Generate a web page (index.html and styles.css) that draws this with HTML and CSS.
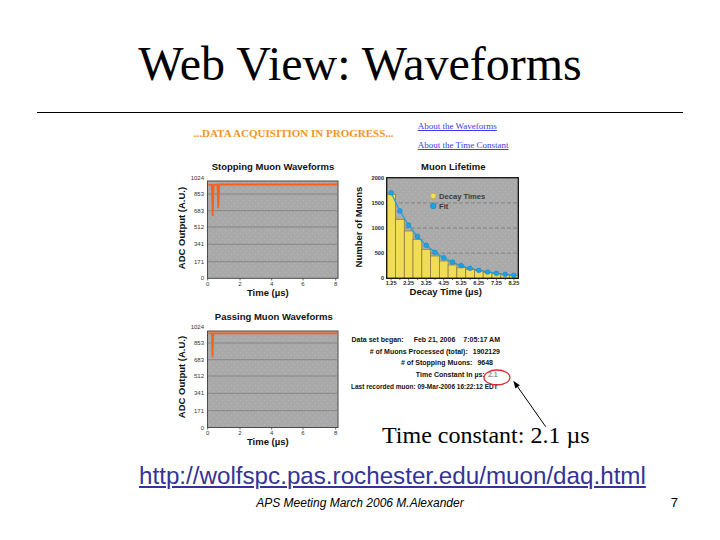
FILE: index.html
```html
<!DOCTYPE html>
<html>
<head>
<meta charset="utf-8">
<title>Web View: Waveforms</title>
<link rel="stylesheet" href="styles.css">
</head>
<body>
<div class="slide">
  <h1 class="title">Web View: Waveforms</h1>
  <div class="rule"></div>

  <div class="web">
    <div class="topbar">
      <div class="status">...DATA ACQUISITION IN PROGRESS...</div>
      <div class="links">
        <a href="#waveforms">About the Waveforms</a>
        <a href="#timeconstant">About the Time Constant</a>
      </div>
    </div>

    <div class="charts">
      <!-- Stopping muon waveforms -->
      <svg class="chart" width="175" height="142" viewBox="0 0 175 142">
        <defs>
          <pattern id="stipA" width="6" height="6" patternUnits="userSpaceOnUse">
            <rect width="6" height="6" fill="#a9a9a9"/>
            <rect x="1" y="1" width="1" height="1" fill="#b9b9b9"/>
            <rect x="4" y="4" width="1" height="1" fill="#b6b6b6"/>
          </pattern>
        </defs>
        <text class="ct" x="103" y="13.3" text-anchor="middle">Stopping Muon Waveforms</text>
        <text class="ct" transform="translate(15.3,71) rotate(-90)" text-anchor="middle">ADC Output (A.U.)</text>
        <rect x="37.5" y="24" width="130.5" height="97.3" fill="url(#stipA)" stroke="#4a4a4a" stroke-width="1"/>
        <g class="grid">
          <line x1="38" y1="37" x2="167.5" y2="37"/>
          <line x1="38" y1="53.7" x2="167.5" y2="53.7"/>
          <line x1="38" y1="70" x2="167.5" y2="70"/>
          <line x1="38" y1="87.3" x2="167.5" y2="87.3"/>
          <line x1="38" y1="104.7" x2="167.5" y2="104.7"/>
        </g>
        <g class="tl" text-anchor="end">
          <text x="34" y="23.4">1024</text>
          <text x="34" y="39.1">853</text>
          <text x="34" y="55.8">683</text>
          <text x="34" y="72.1">512</text>
          <text x="34" y="89.4">341</text>
          <text x="34" y="106.8">171</text>
          <text x="34" y="123.4">0</text>
        </g>
        <g class="ticks">
          <line x1="37.7" y1="121.3" x2="37.7" y2="123.5"/>
          <line x1="70" y1="121.3" x2="70" y2="123.5"/>
          <line x1="101.7" y1="121.3" x2="101.7" y2="123.5"/>
          <line x1="133" y1="121.3" x2="133" y2="123.5"/>
          <line x1="165.7" y1="121.3" x2="165.7" y2="123.5"/>
        </g>
        <g class="tl" text-anchor="middle">
          <text x="37.7" y="128.5">0</text>
          <text x="70" y="128.5">2</text>
          <text x="101.7" y="128.5">4</text>
          <text x="133" y="128.5">6</text>
          <text x="165.7" y="128.5">8</text>
        </g>
        <path class="wave" d="M38.5 27.8 L41.8 27.8 L42.7 59 L43.6 28 L47.4 27.5 L48.3 51.3 L49.2 27.5 L167.5 27.5"/>
        <text class="ct" x="97.8" y="139" text-anchor="middle">Time (µs)</text>
      </svg>

      <!-- Muon lifetime -->
      <svg class="chart" width="180" height="142" viewBox="0 0 180 142">
        <defs>
          <pattern id="stipB" width="6" height="6" patternUnits="userSpaceOnUse">
            <rect width="6" height="6" fill="#aaaaaa"/>
            <rect x="1" y="1" width="1" height="1" fill="#bababa"/>
            <rect x="4" y="4" width="1" height="1" fill="#b7b7b7"/>
          </pattern>
        </defs>
        <text class="ct" x="108.3" y="13.3" text-anchor="middle">Muon Lifetime</text>
        <text class="ct" transform="translate(16.9,70) rotate(-90)" text-anchor="middle">Number of Muons</text>
        <rect x="41.7" y="20.7" width="131.6" height="100.6" fill="url(#stipB)"/>
        <g class="dash">
          <line x1="42" y1="45.9" x2="173" y2="45.9"/>
          <line x1="42" y1="71" x2="173" y2="71"/>
          <line x1="42" y1="96.2" x2="173" y2="96.2"/>
        </g>
        <g class="bars">
          <rect x="41.7" y="37.3" width="8.775" height="84"/>
          <rect x="50.5" y="62.3" width="8.775" height="59"/>
          <rect x="59.3" y="74" width="8.775" height="47.3"/>
          <rect x="68" y="82.3" width="8.775" height="39"/>
          <rect x="76.8" y="92.3" width="8.775" height="29"/>
          <rect x="85.6" y="99" width="8.775" height="22.3"/>
          <rect x="94.4" y="104" width="8.775" height="17.3"/>
          <rect x="103.1" y="108" width="8.775" height="13.3"/>
          <rect x="111.9" y="110.7" width="8.775" height="10.6"/>
          <rect x="120.7" y="112.3" width="8.775" height="9"/>
          <rect x="129.5" y="113.7" width="8.775" height="7.6"/>
          <rect x="138.2" y="115.3" width="8.775" height="6"/>
          <rect x="147" y="116.6" width="8.775" height="4.7"/>
          <rect x="155.8" y="117.8" width="8.775" height="3.5"/>
          <rect x="164.6" y="118.5" width="8.775" height="2.8"/>
        </g>
        <polyline class="fit" points="46.1,35.8 54.9,53.9 63.6,68.2 72.4,79.5 81.2,88.3 90,95.3 98.7,100.8 107.5,105.2 116.3,108.6 125.1,111.3 133.8,113.4 142.6,115.1 151.4,116.4 160.2,117.4 168.9,118.3"/>
        <g class="dots">
          <circle cx="46.1" cy="35.8" r="2.4"/>
          <circle cx="54.9" cy="53.9" r="2.4"/>
          <circle cx="63.6" cy="68.2" r="2.4"/>
          <circle cx="72.4" cy="79.5" r="2.4"/>
          <circle cx="81.2" cy="88.3" r="2.4"/>
          <circle cx="90" cy="95.3" r="2.4"/>
          <circle cx="98.7" cy="100.8" r="2.4"/>
          <circle cx="107.5" cy="105.2" r="2.4"/>
          <circle cx="116.3" cy="108.6" r="2.4"/>
          <circle cx="125.1" cy="111.3" r="2.4"/>
          <circle cx="133.8" cy="113.4" r="2.4"/>
          <circle cx="142.6" cy="115.1" r="2.4"/>
          <circle cx="151.4" cy="116.4" r="2.4"/>
          <circle cx="160.2" cy="117.4" r="2.4"/>
          <circle cx="168.9" cy="118.3" r="2.4"/>
        </g>
        <rect x="41.7" y="20.7" width="131.6" height="100.6" fill="none" stroke="#111" stroke-width="1.3"/>
        <circle cx="88.3" cy="39" r="2.8" fill="#f3df4f" stroke="#b9a53a" stroke-width="0.6"/>
        <text class="lg" x="94" y="41.8">Decay Times</text>
        <circle cx="88.3" cy="49" r="2.8" fill="#1ea3e4" stroke="#117cbd" stroke-width="0.6"/>
        <text class="lg" x="94" y="51.8">Fit</text>
        <g class="tl tlb" text-anchor="end">
          <text x="39" y="22.8">2000</text>
          <text x="39" y="48">1500</text>
          <text x="39" y="73.1">1000</text>
          <text x="39" y="98.3">500</text>
          <text x="39" y="123.4">0</text>
        </g>
        <g class="ticks">
          <line x1="46.1" y1="121.3" x2="46.1" y2="123.5"/>
          <line x1="54.9" y1="121.3" x2="54.9" y2="123"/>
          <line x1="63.6" y1="121.3" x2="63.6" y2="123.5"/>
          <line x1="72.4" y1="121.3" x2="72.4" y2="123"/>
          <line x1="81.2" y1="121.3" x2="81.2" y2="123.5"/>
          <line x1="90" y1="121.3" x2="90" y2="123"/>
          <line x1="98.7" y1="121.3" x2="98.7" y2="123.5"/>
          <line x1="107.5" y1="121.3" x2="107.5" y2="123"/>
          <line x1="116.3" y1="121.3" x2="116.3" y2="123.5"/>
          <line x1="125.1" y1="121.3" x2="125.1" y2="123"/>
          <line x1="133.8" y1="121.3" x2="133.8" y2="123.5"/>
          <line x1="142.6" y1="121.3" x2="142.6" y2="123"/>
          <line x1="151.4" y1="121.3" x2="151.4" y2="123.5"/>
          <line x1="160.2" y1="121.3" x2="160.2" y2="123"/>
          <line x1="168.9" y1="121.3" x2="168.9" y2="123.5"/>
        </g>
        <g class="tl tlb" text-anchor="middle">
          <text x="46.1" y="128">1.25</text>
          <text x="63.6" y="128">2.25</text>
          <text x="81.2" y="128">3.25</text>
          <text x="98.7" y="128">4.25</text>
          <text x="116.3" y="128">5.25</text>
          <text x="133.8" y="128">6.25</text>
          <text x="151.4" y="128">7.25</text>
          <text x="168.9" y="128">8.25</text>
        </g>
        <text class="ct" x="100.8" y="138.3" text-anchor="middle">Decay Time (µs)</text>
      </svg>

      <!-- Passing muon waveforms -->
      <svg class="chart" width="175" height="142" viewBox="0 0 175 142">
        <defs>
          <pattern id="stipC" width="6" height="6" patternUnits="userSpaceOnUse">
            <rect width="6" height="6" fill="#a9a9a9"/>
            <rect x="1" y="1" width="1" height="1" fill="#b9b9b9"/>
            <rect x="4" y="4" width="1" height="1" fill="#b6b6b6"/>
          </pattern>
        </defs>
        <text class="ct" x="103.8" y="13.6" text-anchor="middle">Passing Muon Waveforms</text>
        <text class="ct" transform="translate(15.3,71) rotate(-90)" text-anchor="middle">ADC Output (A.U.)</text>
        <rect x="37.5" y="25" width="130.5" height="96.5" fill="url(#stipC)" stroke="#4a4a4a" stroke-width="1"/>
        <g class="grid">
          <line x1="38" y1="37" x2="167.5" y2="37"/>
          <line x1="38" y1="53.7" x2="167.5" y2="53.7"/>
          <line x1="38" y1="70" x2="167.5" y2="70"/>
          <line x1="38" y1="87.3" x2="167.5" y2="87.3"/>
          <line x1="38" y1="104.7" x2="167.5" y2="104.7"/>
        </g>
        <g class="tl" text-anchor="end">
          <text x="34" y="23.2">1024</text>
          <text x="34" y="38.6">853</text>
          <text x="34" y="55.9">683</text>
          <text x="34" y="71.9">512</text>
          <text x="34" y="89.2">341</text>
          <text x="34" y="106.6">171</text>
          <text x="34" y="123.6">0</text>
        </g>
        <g class="ticks">
          <line x1="37.7" y1="121.5" x2="37.7" y2="123.7"/>
          <line x1="70" y1="121.5" x2="70" y2="123.7"/>
          <line x1="101.7" y1="121.5" x2="101.7" y2="123.7"/>
          <line x1="133" y1="121.5" x2="133" y2="123.7"/>
          <line x1="165.7" y1="121.5" x2="165.7" y2="123.7"/>
        </g>
        <g class="tl" text-anchor="middle">
          <text x="37.7" y="128.7">0</text>
          <text x="70" y="128.7">2</text>
          <text x="101.7" y="128.7">4</text>
          <text x="133" y="128.7">6</text>
          <text x="165.7" y="128.7">8</text>
        </g>
        <path class="wave" d="M38.5 27.3 L41.9 27.3 L42.5 51.1 L43.3 27.3 L167.5 27.3"/>
        <text class="ct" x="97.8" y="139.2" text-anchor="middle">Time (µs)</text>
      </svg>

      <!-- Run information -->
      <div class="info">
        <div class="stats">
          <p class="row"><span>Data set began:</span><span class="g10">Feb 21, 2006</span><span class="g8">7:05:17 AM</span></p>
          <p class="row"><span>#&nbsp;of Muons Processed (total):</span><span class="g5">1902129</span></p>
          <p class="row r3"><span>#&nbsp;of Stopping Muons:</span><span class="g5">9648</span></p>
          <p class="row r4"><span>Time Constant in µs:</span><span class="g3 tc">2.1</span></p>
        </div>
        <p class="last">Last recorded muon: 09-Mar-2006 16:22:12 EDT</p>
        <p class="note">Time constant: 2.1 µs</p>
      </div>
    </div>
  </div>

  <p class="url"><a href="#daq">http://wolfspc.pas.rochester.edu/muon/daq.html</a></p>

  <div class="footer">
    <span></span>
    <span class="credit">APS Meeting March 2006 M.Alexander</span>
    <span class="page">7</span>
  </div>

  <svg class="overlay" width="720" height="540" viewBox="0 0 720 540">
    <ellipse cx="497" cy="377.5" rx="13" ry="7.5" fill="none" stroke="#e3262c" stroke-width="1.3"/>
    <line x1="545.7" y1="426.7" x2="515.6" y2="383.9" stroke="#000" stroke-width="1"/>
    <polygon points="513.3,380.7 515.4,388.4 519.85,385.3" fill="#000"/>
  </svg>
</div>
</body>
</html>
```

FILE: styles.css
```css
html, body {
  margin: 0;
  padding: 0;
  background: #ffffff;
}

.slide {
  position: relative;
  width: 720px;
  height: 540px;
  overflow: hidden;
  background: #ffffff;
  font-family: "Liberation Serif", "Times New Roman", serif;
  color: #000;
}

.title {
  margin: 0;
  padding-top: 37px;
  font-family: "Liberation Serif", "Times New Roman", serif;
  font-size: 48px;
  font-weight: normal;
  line-height: 54px;
  text-align: center;
  color: #000;
}

.rule {
  margin: 21px 37px 0 37px;
  height: 1px;
  background: #000;
}

.web {
  margin-left: 170px;
}

.topbar {
  margin-top: 4px;
  height: 38px;
  display: grid;
  grid-template-columns: 247.7px auto;
}

.status {
  padding: 6.6px 0 0 23.8px;
  line-height: 19px;
  font-family: "Liberation Serif", "Times New Roman", serif;
  font-size: 11px;
  font-weight: bold;
  color: #f7931e;
  white-space: nowrap;
}

.links {
  display: flex;
  flex-direction: column;
}

.links a {
  line-height: 19px;
  font-family: "Liberation Serif", "Times New Roman", serif;
  font-size: 9px;
  color: #3b3bf0;
  text-decoration: underline;
  white-space: nowrap;
}

.charts {
  margin-top: 2px;
  display: grid;
  grid-template-columns: 175px 180px;
  grid-template-rows: 142px 142px;
  row-gap: 7px;
}

.chart {
  display: block;
  overflow: visible;
}

.ct {
  font-family: "Liberation Sans", Arial, sans-serif;
  font-size: 9.5px;
  font-weight: bold;
  fill: #111;
}

.tl {
  font-family: "Liberation Sans", Arial, sans-serif;
  font-size: 6px;
  fill: #333;
}

.tlb {
  font-weight: bold;
  font-size: 5.6px;
  fill: #2a2a2a;
}

.lg {
  font-family: "Liberation Sans", Arial, sans-serif;
  font-size: 7.6px;
  font-weight: bold;
  fill: #3c3c3c;
}

.grid line {
  stroke: #858585;
  stroke-width: 1;
}

.dash line {
  stroke: #7a7a7a;
  stroke-width: 0.8;
  stroke-dasharray: 4 2;
}

.ticks line {
  stroke: #333;
  stroke-width: 0.7;
}

.wave {
  fill: none;
  stroke: #f5621d;
  stroke-width: 1.8;
  stroke-linejoin: miter;
}

.bars rect {
  fill: #f1dc55;
  stroke: #8c7d44;
  stroke-width: 0.8;
}

.fit {
  fill: none;
  stroke: #1e9fe0;
  stroke-width: 1.2;
}

.dots circle {
  fill: #1ea3e4;
  stroke: #127fc0;
  stroke-width: 0.5;
}

.info {
  padding: 27.9px 0 0 6px;
  font-family: "Liberation Sans", Arial, sans-serif;
}

.stats {
  width: 149px;
}

.row {
  margin: 0;
  display: flex;
  justify-content: flex-end;
  line-height: 11.8px;
  font-size: 7px;
  font-weight: bold;
  color: #111;
  white-space: nowrap;
}

.r3 {
  margin-right: 7px;
}

.r4 {
  margin-right: 2.3px;
}

.g10 { margin-left: 10px; }
.g8 { margin-left: 8px; }
.g5 { margin-left: 5px; }
.g3 { margin-left: 3.3px; }

.tc {
  color: #8f8f8f;
}

.last {
  margin: 0;
  line-height: 11.8px;
  font-size: 6.5px;
  font-weight: bold;
  color: #111;
  white-space: nowrap;
}

.note {
  margin: 28.1px 0 0 31px;
  font-family: "Liberation Serif", "Times New Roman", serif;
  font-size: 24px;
  line-height: 28px;
  color: #000;
  white-space: nowrap;
}

.url {
  margin: 13.7px 0 0 0;
  padding-left: 139px;
  line-height: 28px;
  font-family: "Liberation Sans", Arial, sans-serif;
  font-size: 24.2px;
}

.url a {
  color: #33339a;
  text-decoration: underline;
  text-decoration-thickness: 2px;
  text-underline-offset: 2px;
}

.footer {
  margin-top: 6.3px;
  display: grid;
  grid-template-columns: 1fr auto 1fr;
  line-height: 14px;
  font-family: "Liberation Sans", Arial, sans-serif;
}

.credit {
  font-size: 12px;
  font-style: italic;
  color: #000;
}

.page {
  justify-self: end;
  padding-right: 42px;
  font-size: 13px;
  color: #000;
}

.overlay {
  position: absolute;
  left: 0;
  top: 0;
  pointer-events: none;
}
```
